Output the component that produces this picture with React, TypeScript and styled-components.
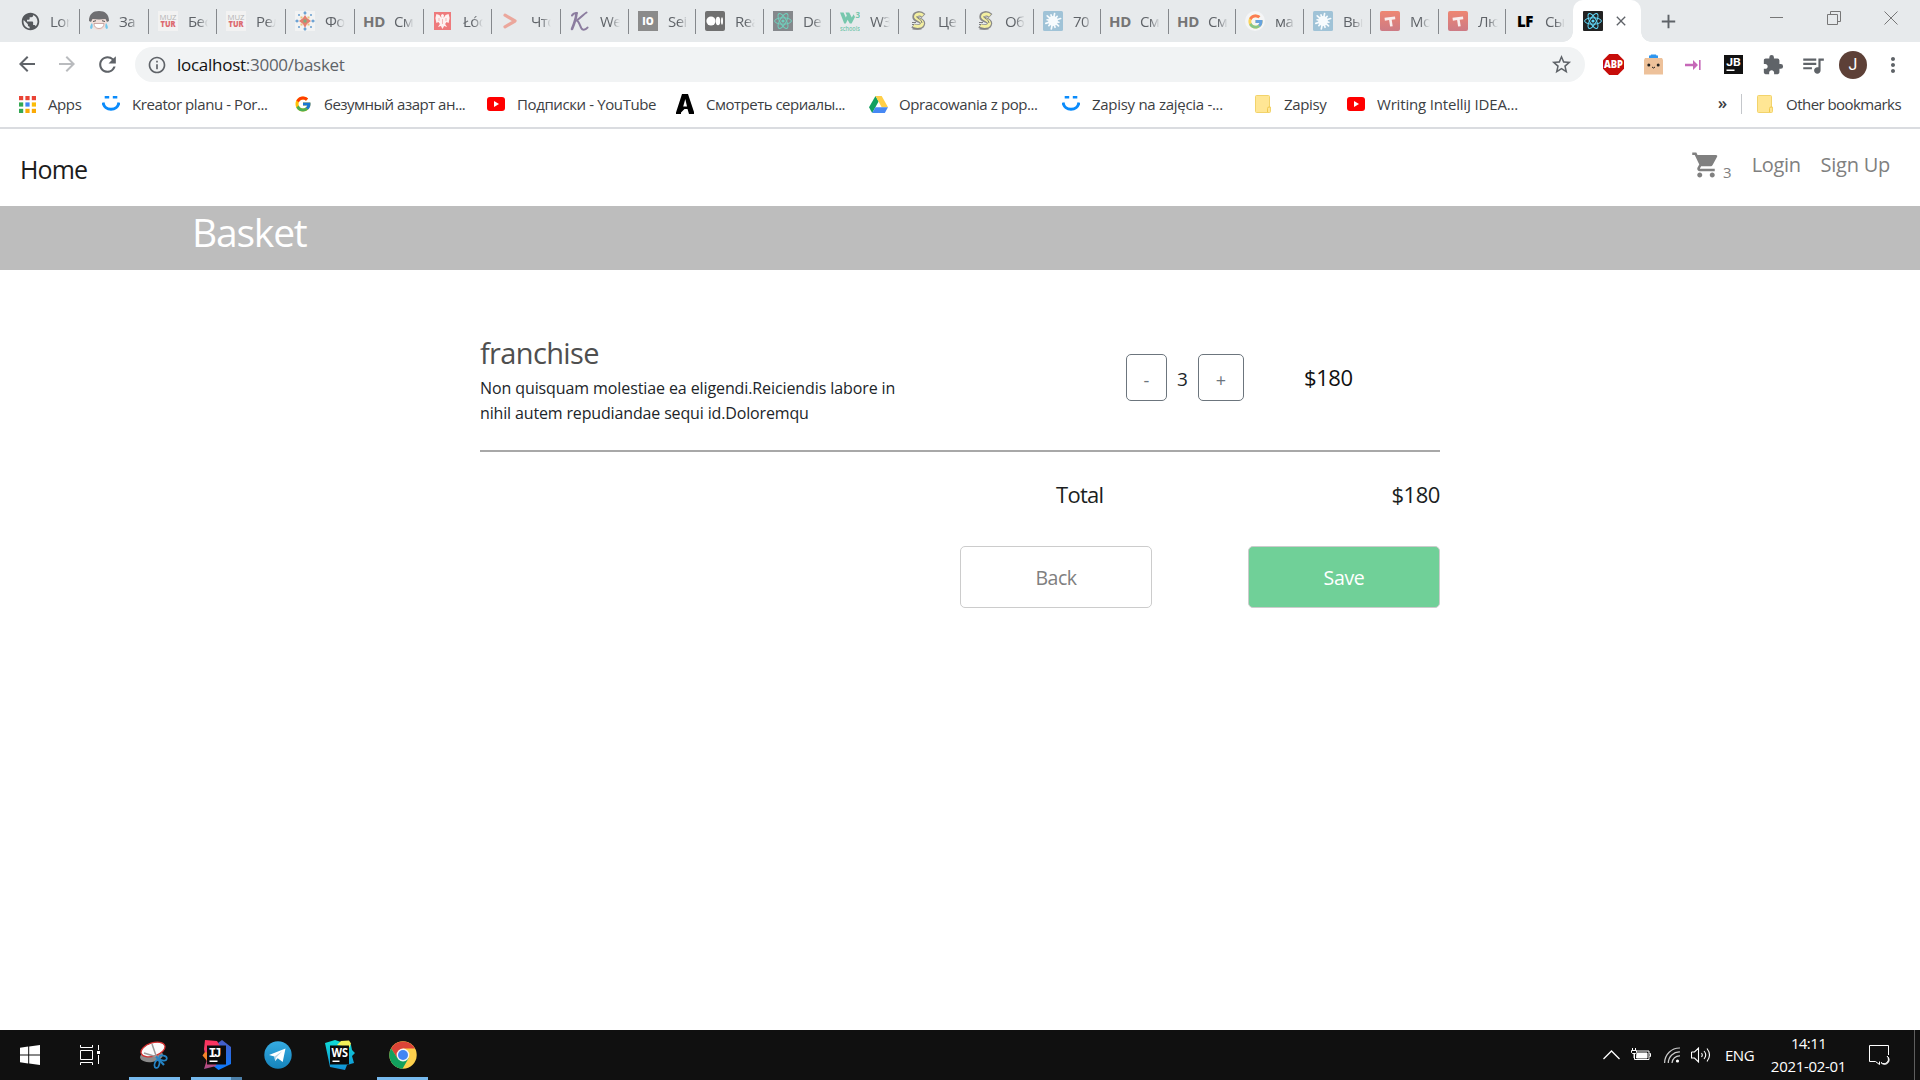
import React from "react";
import styled, { createGlobalStyle, css } from "styled-components";
import {
  MdArrowBack, MdArrowForward, MdRefresh, MdInfoOutline, MdStarOutline, MdExtension,
  MdQueueMusic, MdMoreVert, MdShoppingCart, MdClose, MdAdd, MdPublic,
} from "react-icons/md";
import { FcGoogle } from "react-icons/fc";

const GlobalStyle = createGlobalStyle`
  * { box-sizing: border-box; }
  html, body { margin: 0; padding: 0; background: #fff; }
  body { font-family: "Open Sans", "Noto Sans", sans-serif; overflow: hidden; }
  svg { display: block; flex: none; }
`;

const Screen = styled.div`
  width: 1920px;
  height: 1080px;
  display: flex;
  flex-direction: column;
  overflow: hidden;
`;

const Label = styled.span<{ $size: number; $ls?: number }>`
  font-size: ${(p) => p.$size}px;
  letter-spacing: ${(p) => p.$ls ?? 0}px;
  white-space: nowrap;
`;

/* ---------- tab strip ---------- */

const TabStrip = styled.div`
  height: 42px;
  flex: none;
  display: flex;
  background: #e7eaec;
  padding-left: 11px;
`;

const Tab = styled.div<{ $w: number }>`
  width: ${(p) => p.$w}px;
  height: 42px;
  display: flex;
  align-items: center;
  padding-left: 9px;
  background: linear-gradient(#85888c, #85888c) right 0 top 9px / 1px 25px no-repeat;
  &:last-of-type { background: none; }
`;

const TabIcon = styled.div`
  width: 20px;
  height: 20px;
  flex: none;
  display: flex;
  align-items: center;
  justify-content: center;
`;

const TabTitle = styled.div`
  width: 20px;
  margin-left: 10px;
  overflow: hidden;
  white-space: nowrap;
  font-size: 15px;
  line-height: 41px;
  letter-spacing: -0.6px;
  color: #5f6368;
  mask-image: linear-gradient(90deg, #000 50%, transparent 100%);
`;

const ActiveTab = styled.div`
  width: 68px;
  height: 42px;
  position: relative;
  background: #fff;
  border-radius: 10px 10px 0 0;
  display: flex;
  align-items: center;
  padding-left: 10px;
  gap: 10px;
  color: #5f6368;
  &::before, &::after {
    content: "";
    position: absolute;
    bottom: 0;
    width: 10px;
    height: 10px;
  }
  &::before { left: -10px; background: radial-gradient(circle at 0 0, transparent 9.5px, #fff 10px); }
  &::after { right: -10px; background: radial-gradient(circle at 100% 0, transparent 9.5px, #fff 10px); }
`;

const NewTab = styled.div`
  width: 24px;
  height: 42px;
  margin-left: 16px;
  display: flex;
  align-items: center;
  color: #5f6368;
`;

const WindowControls = styled.div`
  margin-left: auto;
  height: 36px;
  padding-right: 22px;
  display: flex;
  align-items: center;
  gap: 43px;
`;

const TextMark = styled.span<{ $color: string; $w?: number }>`
  font-weight: ${(p) => p.$w ?? 700};
  font-size: 15px;
  letter-spacing: -0.4px;
  color: ${(p) => p.$color};
`;

const ReactLogo = ({ bg, fg, r = 0 }: { bg: string; fg: string; r?: number }) => (
  <svg width="20" height="20" viewBox="0 0 20 20" fill="none" stroke={fg} strokeWidth="1">
    <rect width="20" height="20" rx={r} fill={bg} stroke="none" />
    <ellipse cx="10" cy="10" rx="8.4" ry="3.2" />
    <ellipse cx="10" cy="10" rx="8.4" ry="3.2" transform="rotate(60 10 10)" />
    <ellipse cx="10" cy="10" rx="8.4" ry="3.2" transform="rotate(120 10 10)" />
    <circle cx="10" cy="10" r="1.6" fill={fg} stroke="none" />
  </svg>
);

const Laugh = () => (
  <svg width="20" height="20" viewBox="0 0 20 20">
    <ellipse cx="10" cy="11" rx="8.2" ry="8.3" fill="#f1dfda" />
    <path d="M0 10C0 3 4 0 10 0s10 3 10 10l-2 1-1.500-3-6.500.6L3.500 8 2 11z" fill="#6f6f72" />
    <path d="M4 10.500l3-.8M16 10.500l-3-.8" stroke="#555" strokeWidth="1" />
    <path d="M5 12.500h10c0 3-2 5-5 5s-5-2-5-5z" fill="#fff" stroke="#b78d88" strokeWidth=".7" />
    <path d="M3 12c1 2 1 5-.5 6C.5 18 .8 15 3 12zM17 12c-1 2-1 5 .5 6 2 0 1.700-3-.5-6z" fill="#73c6ea" />
  </svg>
);

const MuzTur = () => (
  <svg width="20" height="20" viewBox="0 0 20 20">
    <rect width="20" height="20" fill="#f2f2f2" />
    <text x="10" y="8.600" fontSize="8" textAnchor="middle" textLength="17" lengthAdjust="spacingAndGlyphs" fill="#b5b5b5">MUZ</text>
    <text x="10" y="16.400" fontSize="8" fontWeight="800" textAnchor="middle" textLength="15" lengthAdjust="spacingAndGlyphs" fill="#dc6a70">TUR</text>
  </svg>
);

const Ornament = () => (
  <svg width="20" height="20" viewBox="0 0 20 20">
    <rect width="20" height="20" fill="#f2f3f3" />
    <path d="M10 4l2 3 4 3-4 3-2 4-2-4-4-3 4-3z" fill="#e57f70" />
    <path d="M10 0l1.800 2L10 4 8.200 2zM10 16l1.800 2L10 20l-1.800-2zM0 10l2-1.800L4 10l-2 1.800zM16 10l2-1.800L20 10l-2 1.800z" fill="#6da3d3" />
    <path d="M3 3h2v2H3zM15 3h2v2h-2zM3 15h2v2H3zM15 15h2v2h-2z" fill="#8ab3d8" />
    <path d="M5.500 5.500h2v2h-2zM12.500 5.500h2v2h-2zM5.500 12.500h2v2h-2zM12.500 12.500h2v2h-2z" fill="#ecc37a" />
    <rect x="8.500" y="8.500" width="3" height="3" fill="#7dae7e" />
  </svg>
);

const Eagle = () => (
  <svg width="20" height="20" viewBox="0 0 20 20">
    <rect x="1" y="1" width="17" height="18" fill="#ee7a7c" />
    <path d="M9.500 3l1.500 1-.4 3 2-3 3-1 1 4-1 5-2-1-1.500 2 2 3-3-1-1.600 3-1.600-3-3 1 2-3L5.400 11l-2 1-1-5 1-4 3 1 2 3L8 4z" fill="#fdf1f1" />
    <path d="M6 7v3M13 7v3M9.500 8v5" stroke="#f3a9aa" strokeWidth=".8" />
  </svg>
);

const Chevron = () => (
  <svg width="20" height="20" viewBox="0 0 20 20" fill="none" stroke="#eba79c" strokeWidth="3.200">
    <path d="M4 4.200l10 5.800L4 15.800" strokeLinejoin="round" strokeLinecap="round" />
  </svg>
);

const ScriptK = () => (
  <svg width="20" height="20" viewBox="0 0 20 20" fill="none" stroke="#8c7d9f" strokeLinecap="round">
    <path d="M6.500 2.200C6 8 4 13.500 2 18" strokeWidth="2.600" />
    <path d="M2 4.500C3 2.500 5 2 7 2M16.500 1.500C14 3 10 7.500 6.500 9.500 10 10 10 18 13 18.600c2 .3 3.500-.8 4.500-2" strokeWidth="2" />
  </svg>
);

const TenMark = () => (
  <svg width="20" height="20" viewBox="0 0 20 20">
    <rect width="20" height="20" fill="#8b8b8b" />
    <text x="10" y="13.800" fontSize="10" fontWeight="800" textAnchor="middle" fill="#fff">IO</text>
  </svg>
);

const Medium = () => (
  <svg width="20" height="20" viewBox="0 0 20 20" fill="#fff">
    <rect width="20" height="20" rx="2" fill="#707070" />
    <circle cx="6" cy="10" r="4.600" />
    <ellipse cx="13" cy="10" rx="2.200" ry="4.300" />
    <ellipse cx="17" cy="10" rx="1" ry="3.800" />
  </svg>
);

const W3 = () => (
  <svg width="20" height="21" viewBox="0 0 20 21" fill="#77c7ad">
    <path d="M0 1.500h3.600l2.200 5 1-2-1.300-3h3.700l2.600 5 1.800-3.300L15 6l-3.400 6.500H9.800L7.600 8.800 5.800 12.500H4.200z" />
    <text x="15.500" y="6.500" fontSize="8" fontWeight="700">3</text>
    <text x="0" y="19.500" fontSize="6.500" fontWeight="600" textLength="20" lengthAdjust="spacingAndGlyphs">schools</text>
  </svg>
);

const DollarS = () => (
  <svg width="20" height="20" viewBox="0 0 20 20" fill="none">
    <path d="M15.500 5C12 1.500 7 2.500 7 6c0 3.500 8 2.500 7.500 6.500C14 16.500 8 17 5 14.500" stroke="#8a8a8a" strokeWidth="5.400" />
    <path d="M15 4.500C12 2 7.500 3 7.500 6c.5 3 7 2.500 7 6.500-.5 3.500-6 3.500-9 2" stroke="#f3efa0" strokeWidth="3" />
    <path d="M8.500 5.500C9 8 14 8 14 12M4.500 18h9M4 11.500h4M4 13.500h2" stroke="#7d7d7d" strokeWidth="1" />
  </svg>
);

const spikes = [7.600, 6.200, 8, 6, 7.400, 6.600, 8, 6.200, 7.600, 6, 7.800, 6.400];
const Splash = () => (
  <svg width="20" height="20" viewBox="0 0 20 20">
    <rect width="20" height="20" rx="1.500" fill="#a0c3d7" />
    <circle cx="10" cy="10" r="4.900" fill="#f7fbfd" />
    {spikes.map((len, i) => (
      <path key={i} d={`M10 10V${10 - len}`} stroke="#f7fbfd" strokeWidth="1.700" strokeLinecap="round" transform={`rotate(${i * 30 + 12} 10 10)`} />
    ))}
  </svg>
);

const TBadge = () => (
  <svg width="20" height="20" viewBox="0 0 20 20">
    <defs>
      <linearGradient id="tb" x1="0" y1="0" x2="0" y2="1">
        <stop offset="0" stopColor="#ee8672" />
        <stop offset="1" stopColor="#cd7b85" />
      </linearGradient>
    </defs>
    <rect width="20" height="20" rx="2" fill="url(#tb)" />
    <path d="M4.500 6.800L15 5.500l.3 2.800-3.600.5 1 6.400-2.600.4-1-6.500-4.200.6z" fill="#f8eeee" />
  </svg>
);

const GCircle = styled.div`
  width: 20px;
  height: 20px;
  border-radius: 50%;
  background: #f4f5f6;
  display: flex;
  align-items: center;
  justify-content: center;
  svg { opacity: 0.65; }
`;

const Google = () => (
  <GCircle>
    <FcGoogle size={17} />
  </GCircle>
);

const HD = () => <TextMark $color="#757575">HD</TextMark>;

const tabs: { w: number; icon: React.ReactNode; title: string }[] = [
  { w: 69, icon: <MdPublic size={21} color="#55585c" />, title: "Lor" },
  { w: 69, icon: <Laugh />, title: "За" },
  { w: 68, icon: <MuzTur />, title: "Бес" },
  { w: 69, icon: <MuzTur />, title: "Рел" },
  { w: 69, icon: <Ornament />, title: "Фо" },
  { w: 69, icon: <HD />, title: "См" },
  { w: 68, icon: <Eagle />, title: "Łóс" },
  { w: 69, icon: <Chevron />, title: "Что" },
  { w: 68, icon: <ScriptK />, title: "We" },
  { w: 67, icon: <TenMark />, title: "Sei" },
  { w: 68, icon: <Medium />, title: "Rea" },
  { w: 67, icon: <ReactLogo bg="#85888c" fg="#6fd0bd" />, title: "De" },
  { w: 68, icon: <W3 />, title: "W3" },
  { w: 67, icon: <DollarS />, title: "Це" },
  { w: 68, icon: <DollarS />, title: "Об" },
  { w: 67, icon: <Splash />, title: "70" },
  { w: 68, icon: <HD />, title: "См" },
  { w: 67, icon: <HD />, title: "См" },
  { w: 68, icon: <Google />, title: "ма" },
  { w: 67, icon: <Splash />, title: "Вы" },
  { w: 68, icon: <TBadge />, title: "Мо" },
  { w: 67, icon: <TBadge />, title: "Лю" },
  { w: 67, icon: <TextMark $color="#000" $w={800}>LF</TextMark>, title: "Сы" },
];

const Tabs = styled.div`
  display: flex;
`;

/* ---------- toolbar ---------- */

const Toolbar = styled.div`
  height: 45px;
  flex: none;
  display: flex;
  align-items: center;
  padding: 0 0 0 15px;
  color: #5f6368;
`;

const NavButtons = styled.div`
  width: 120px;
  flex: none;
  display: flex;
  gap: 16px;
`;

const Omnibox = styled.div`
  width: 1450px;
  height: 35px;
  flex: none;
  border-radius: 18px;
  background: #f1f3f4;
  display: flex;
  align-items: center;
  padding: 0 12px 0 12px;
`;

const Url = styled.div`
  margin-left: 10px;
  flex: 1;
  color: #5f6368;
  line-height: 35px;
  b { font-weight: 400; color: #111; }
`;

const Extensions = styled.div`
  display: grid;
  grid-template-columns: repeat(8, 40px);
  margin-left: 8px;
  height: 35px;
  justify-items: center;
  align-items: center;
`;

const Avatar = styled.div`
  width: 28px;
  height: 28px;
  border-radius: 50%;
  background: #5d4037;
  color: #fff;
  font: 16px Roboto, sans-serif;
  display: flex;
  align-items: center;
  justify-content: center;
`;

const Abp = () => (
  <svg width="21" height="21" viewBox="0 0 21 21">
    <path d="M6.200 0h8.600L21 6.200v8.600L14.800 21H6.200L0 14.800V6.200z" fill="#c70d0a" />
    <text x="10.500" y="14.200" fontSize="10.500" fontWeight="800" textAnchor="middle" textLength="19" lengthAdjust="spacingAndGlyphs" fill="#fff">ABP</text>
  </svg>
);

const BoxFace = () => (
  <svg width="19" height="21" viewBox="0 0 19 21">
    <path d="M5 1.500h1.500L7 .5h5l.5 1H14V5H5z" fill="#2f96ef" />
    <path d="M1 4h17l1 2v14.500H0V6z" fill="#edc19a" />
    <circle cx="4.800" cy="11" r="1.500" fill="#222" />
    <circle cx="14.200" cy="11" r="1.500" fill="#222" />
    <path d="M8 13l1.500 1 1.500-1" stroke="#222" fill="none" />
  </svg>
);

const ArrowBar = () => (
  <svg width="16" height="12" viewBox="0 0 16 12">
    <path d="M0 4.700h8V1l5 5-5 5V7.300H0z" fill="#c668b8" />
    <rect x="14" y="1" width="1.600" height="10" fill="#c668b8" />
  </svg>
);

const Jb = () => (
  <svg width="19" height="19" viewBox="0 0 19 19">
    <rect width="19" height="19" fill="#111" />
    <text x="9.500" y="11" fontSize="11.500" fontWeight="700" fontFamily="Roboto" textAnchor="middle" textLength="14.500" lengthAdjust="spacingAndGlyphs" fill="#fff">JB</text>
    <rect x="2.500" y="14.500" width="8" height="1.500" fill="#fff" />
  </svg>
);

/* ---------- bookmarks ---------- */

const BookmarkBar = styled.div`
  height: 42px;
  flex: none;
  display: flex;
  align-items: center;
  padding: 0 19px 6px 17px;
  border-bottom: 2px solid #dadce0;
  color: #3c4043;
`;

const Bookmark = styled.div<{ $w?: number }>`
  width: ${(p) => (p.$w ? `${p.$w}px` : "auto")};
  display: flex;
  align-items: center;
`;

const BookmarkIcon = styled.div`
  width: 20px;
  height: 20px;
  margin-right: 11px;
  display: flex;
  align-items: center;
  justify-content: center;
  flex: none;
`;

const Overflow = styled.div`
  margin-left: auto;
  height: 20px;
  display: flex;
  align-items: center;
`;

const More = styled.span`
  font-size: 17px;
  font-weight: 600;
  line-height: 18px;
  padding-bottom: 3px;
`;

const Divider = styled.div`
  width: 1px;
  height: 20px;
  margin: 0 13px 0 14px;
  background: #c4c7cb;
`;

const appColors = ["#ea4335", "#ea4335", "#ea4335", "#34a853", "#4285f4", "#fbbc05", "#34a853", "#fbaa05", "#fbaa05"];
const AppsGrid = () => (
  <svg width="17" height="17" viewBox="0 0 17 17">
    {appColors.map((c, i) => (
      <rect key={i} x={(i % 3) * 6.400} y={Math.floor(i / 3) * 6.400} width="4.200" height="4.200" fill={c} />
    ))}
  </svg>
);
const Smile = () => (
  <svg width="18" height="16" viewBox="0 0 18 16" fill="none" stroke="#0a8bfb">
    <path d="M2.700 1.200h4.500M10.800 1.200h4.500" strokeWidth="2.400" />
    <path d="M1 6.500c1.500 9 14.500 9 16 0" strokeWidth="3" />
  </svg>
);
const YouTube = () => (
  <svg width="18" height="14" viewBox="0 0 18 14">
    <rect width="18" height="14" rx="3" fill="#f00" />
    <path d="M7 4l5 3-5 3z" fill="#fff" />
  </svg>
);
const LetterA = () => (
  <svg width="20" height="20" viewBox="0 0 20 20">
    <path d="M7 0h6l6 18v2h-5l-1.500-5h-3L6 18.500V20H1v-1.500z" fill="#000" />
    <path d="M8.200 12.500h3.800L10.300 5z" fill="#fff" />
  </svg>
);
const Drive = () => (
  <svg width="19" height="17" viewBox="0 0 19 17">
    <path d="M6.500 0L0 11.300 3.200 17 9.600 5.600z" fill="#11a05f" />
    <path d="M6.500 0h6.200L19 11.300h-6.300z" fill="#ffcf48" />
    <path d="M6.400 11.300H19L15.800 17H3.200z" fill="#4688f4" />
  </svg>
);
const Folder = () => (
  <svg width="16" height="18" viewBox="0 0 16 18">
    <path d="M.5 1.500q0-1 1-1h12q1 0 1 1v10.500h1v4.500q0 1-1 1h-13q-1 0-1-1z" fill="#ffe694" stroke="#f2d36b" />
    <path d="M12.500 17v-3.500q0-1.500 1.500-1.500h1" fill="none" stroke="#f0c94e" />
  </svg>
);

const bookmarks: { w: number; icon: React.ReactNode; text: string; ls: number }[] = [
  { w: 84, icon: <AppsGrid />, text: "Apps", ls: -0.4 },
  { w: 192, icon: <Smile />, text: "Kreator planu - Por...", ls: -0.42 },
  { w: 193, icon: <FcGoogle size={18} />, text: "безумный азарт ан...", ls: -0.5 },
  { w: 189, icon: <YouTube />, text: "Подписки - YouTube", ls: -0.39 },
  { w: 193, icon: <LetterA />, text: "Смотреть сериалы...", ls: -0.5 },
  { w: 193, icon: <Drive />, text: "Opracowania z pop...", ls: -0.41 },
  { w: 192, icon: <Smile />, text: "Zapisy na zajęcia -...", ls: -0.29 },
  { w: 93, icon: <Folder />, text: "Zapisy", ls: -0.35 },
  { w: 180, icon: <YouTube />, text: "Writing IntelliJ IDEA...", ls: -0.18 },
];

/* ---------- page ---------- */

const Page = styled.main`
  flex: 1;
  display: flex;
  flex-direction: column;
  background: #fff;
`;

const Nav = styled.nav`
  height: 77px;
  display: flex;
  align-items: center;
  justify-content: space-between;
  padding: 2px 30px 0 20px;
  color: #1c1c1c;
`;

const NavLinks = styled.div`
  display: flex;
  align-items: center;
  gap: 20px;
  margin-bottom: 8px;
  color: #808080;
`;

const CartCount = styled.div`
  display: flex;
  align-items: center;
  sub { font-size: 15px; line-height: 15px; margin: 15px 0 0 2px; }
`;

const Banner = styled.header`
  height: 64px;
  background: #bdbdbd;
  padding-left: 10%;
  color: #fff;
  line-height: 52px;
`;

const Content = styled.section`
  width: 960px;
  margin: 65px auto 0;
`;

const Item = styled.div`
  height: 117px;
  display: grid;
  grid-template-columns: 646px 178px 136px;
  border-bottom: 2px solid #a8a8a8;
`;

const ItemName = styled.div`
  height: 41px;
  line-height: 36px;
  color: #4f4f4f;
`;

const ItemText = styled.div`
  color: #212529;
  line-height: 25px;
`;

const Quantity = styled.div`
  height: 47px;
  margin-top: 19px;
  display: flex;
  align-items: center;
  color: #212529;
`;

const StepButton = styled.button<{ $w: number }>`
  width: ${(p) => p.$w}px;
  height: 47px;
  padding: 4px 0 0;
  border: 1px solid #6c757d;
  border-radius: 5px;
  background: #fff;
  color: #6c757d;
  font: 18px "Open Sans", sans-serif;
`;

const Count = styled.div`
  width: 31px;
  padding-top: 2px;
  text-align: center;
`;

const Price = styled.div`
  height: 47px;
  margin-top: 19px;
  line-height: 47px;
  color: #111;
`;

const TotalRow = styled.div`
  height: 94px;
  padding-left: 576px;
  display: flex;
  justify-content: space-between;
  line-height: 84px;
  color: #1b1e21;
`;

const Actions = styled.div`
  display: flex;
  justify-content: flex-end;
  gap: 96px;
`;

const ActionButton = styled.button<{ $primary?: boolean }>`
  width: 192px;
  height: 62px;
  border: 1px solid #ccc;
  border-radius: 5px;
  background: #fff;
  color: #808080;
  font-family: inherit;
  padding: 1px 0 0;
  ${(p) => p.$primary && css`
    background: #70d098;
    color: #fff;
  `}
`;

/* ---------- taskbar ---------- */

const Taskbar = styled.footer`
  height: 50px;
  flex: none;
  background: #101010;
  color: #fff;
  display: flex;
`;

const TaskItem = styled.div<{ $w: number; $open?: boolean; $multi?: boolean }>`
  width: ${(p) => p.$w}px;
  height: 50px;
  display: flex;
  align-items: center;
  justify-content: center;
  background: ${(p) =>
    p.$multi
      ? "linear-gradient(90deg, #76b9ed 40px, #4c7fa8 40px) center bottom / 51px 3px no-repeat"
      : p.$open
        ? "linear-gradient(#76b9ed, #76b9ed) center bottom / 51px 3px no-repeat"
        : "none"};
`;

const Tray = styled.div`
  margin-left: auto;
  display: flex;
  align-items: center;
`;

const TraySlot = styled.div<{ $w: number; $indent?: number }>`
  width: ${(p) => p.$w}px;
  padding-left: ${(p) => p.$indent ?? 0}px;
`;

const Clock = styled.div`
  width: 97px;
  display: flex;
  flex-direction: column;
  align-items: center;
  line-height: 23px;
`;

const ShowDesktop = styled.div`
  width: 6px;
  height: 50px;
  border-left: 1px solid #5e5e5e;
`;

const Windows = () => (
  <svg width="20" height="20" viewBox="0 0 20 20" fill="#fff">
    <path d="M0 2.800l8.200-1.200v8H0zM9.200 1.400L20 0v9.500H9.200zM0 10.500h8.200v8L0 17.300zM9.200 10.500H20V20L9.200 18.600z" />
  </svg>
);
const TaskView = () => (
  <svg width="20" height="20" viewBox="0 0 20 20" fill="none" stroke="#fff">
    <path d="M.5 0v2.500h12V0M.5 20v-2.500h12V20M.5 5.500h12v9H.5zM18.500 0v5M18.500 10v9" />
    <path d="M17 6h3v3h-3z" fill="#fff" stroke="none" />
  </svg>
);
const Snip = () => (
  <svg width="28" height="28" viewBox="0 0 28 28" fill="none">
    <ellipse cx="11.500" cy="15" rx="11.500" ry="6" fill="#8b8b8b" transform="rotate(-8 11.500 15)" />
    <ellipse cx="13" cy="8.500" rx="12.400" ry="6.600" fill="#fafafa" stroke="#d22f2f" strokeWidth="1.300" transform="rotate(-18 13 8.500)" />
    <path d="M12 3l4.500 13M4 12l13 4" stroke="#999" strokeWidth="1.500" />
    <ellipse cx="23" cy="17" rx="3.800" ry="2.500" stroke="#2484c6" strokeWidth="1.700" transform="rotate(15 23 17)" />
    <ellipse cx="17" cy="23" rx="2.300" ry="4" stroke="#2484c6" strokeWidth="1.700" transform="rotate(15 17 23)" />
    <path d="M16 15.500l8 8.500" stroke="#2484c6" strokeWidth="2.200" />
  </svg>
);
const IntelliJ = () => (
  <svg width="30" height="30" viewBox="0 0 30 30">
    <defs>
      <linearGradient id="ijBlue" x1="0" y1="0" x2="0" y2="1">
        <stop offset="0" stopColor="#4a5bc4" />
        <stop offset="1" stopColor="#0a7cff" />
      </linearGradient>
      <linearGradient id="ijRed" x1="0" y1="0" x2="0" y2="1">
        <stop offset="0" stopColor="#fe315d" />
        <stop offset=".6" stopColor="#e8466a" />
        <stop offset="1" stopColor="#a0508c" />
      </linearGradient>
    </defs>
    <path d="M16 3l4-3 9 7v17l-12.500 6-7-5.500z" fill="url(#ijBlue)" />
    <path d="M3 0l12 1 3 5-4 20-12 3 2.500-8L2 9z" fill="url(#ijRed)" />
    <path d="M.5 15.500L3 12l3 1v9z" fill="#f58529" />
    <rect x="5" y="5.500" width="19" height="19" fill="#0a0a0a" />
    <text x="6.500" y="16.500" fontSize="13" fontWeight="700" fontFamily="Liberation Mono" fill="#fff" textLength="13">IJ</text>
    <rect x="7.500" y="20.500" width="8" height="1.500" fill="#fff" />
  </svg>
);
const Telegram = () => (
  <svg width="28" height="28" viewBox="0 0 28 28">
    <defs>
      <linearGradient id="tg" x1="0" y1="0" x2="0" y2="1">
        <stop offset="0" stopColor="#35abe2" />
        <stop offset="1" stopColor="#1583bb" />
      </linearGradient>
    </defs>
    <circle cx="14" cy="14" r="13.700" fill="url(#tg)" />
    <path d="M5 14l16.500-6.500-2.800 13.500-5-3.700-2.600 2.700-.7-4.600z" fill="#fff" />
    <path d="M10.500 15.400l8-5.400-6.300 6.500-1 3.500z" fill="#b8d6e8" />
  </svg>
);
const WebStorm = () => (
  <svg width="30" height="30" viewBox="0 0 30 30">
    <defs>
      <linearGradient id="ws" x1="0" y1="0" x2="0" y2="1">
        <stop offset="0" stopColor="#0fdcd6" />
        <stop offset="1" stopColor="#118fd6" />
      </linearGradient>
    </defs>
    <path d="M0 3L10 0l6 2 6-1 4 4 1 5 3 3-3 3 2 7-7 2-2 5L5 27z" fill="url(#ws)" />
    <path d="M12 5l4-4 8-.5 2 3-1.500 4z" fill="#f3f058" />
    <rect x="5" y="5.500" width="19" height="19" fill="#0a0a0a" />
    <text x="6.500" y="16.500" fontSize="12" fontWeight="700" fill="#fff" textLength="16.500" lengthAdjust="spacingAndGlyphs">WS</text>
    <rect x="7.500" y="20.500" width="7" height="1.500" fill="#fff" />
  </svg>
);
const Chrome = () => (
  <svg width="28" height="28" viewBox="0 0 28 28">
    <circle cx="14" cy="14" r="13.700" fill="#fdd04c" />
    <path d="M2.100 7.200A13.700 13.700 0 0 1 25.900 7.500L14 7.500 8.500 17.500z" fill="#db4437" />
    <path d="M2.100 7.200A13.700 13.700 0 0 0 13.500 27.700L19.600 17.300 8.400 17.300z" fill="#12a05d" />
    <circle cx="14" cy="14" r="6.400" fill="#f4f4f4" />
    <circle cx="14" cy="14" r="5" fill="#4285f4" />
  </svg>
);

export default function App() {
  return (
    <Screen>
      <GlobalStyle />
      <TabStrip>
        <Tabs>
          {tabs.map((t, i) => (
            <Tab key={i} $w={t.w}>
              <TabIcon>{t.icon}</TabIcon>
              <TabTitle>{t.title}</TabTitle>
            </Tab>
          ))}
        </Tabs>
        <ActiveTab>
          <ReactLogo bg="#222" fg="#61dafb" r={1} />
          <MdClose size={16} />
        </ActiveTab>
        <NewTab><MdAdd size={23} /></NewTab>
        <WindowControls>
          <svg width="14" height="14" stroke="#777" fill="none"><path d="M0 6.500h13" /></svg>
          <svg width="14" height="14" stroke="#777" fill="none"><path d="M.5 3.500h10v10H.5zM3.500 3.500v-3h10v10h-3" /></svg>
          <svg width="14" height="14" stroke="#777" fill="none"><path d="M.5.5l13 13M13.500.5l-13 13" /></svg>
        </WindowControls>
      </TabStrip>

      <Toolbar>
        <NavButtons>
          <MdArrowBack size={24} />
          <MdArrowForward size={24} color="#b9bbbe" />
          <MdRefresh size={25} />
        </NavButtons>
        <Omnibox>
          <MdInfoOutline size={20} />
          <Url><Label $size={17} $ls={-0.27}><b>localhost</b>:3000/basket</Label></Url>
          <MdStarOutline size={23} />
        </Omnibox>
        <Extensions>
          <Abp />
          <BoxFace />
          <ArrowBar />
          <Jb />
          <MdExtension size={22} />
          <MdQueueMusic size={26} />
          <Avatar>J</Avatar>
          <MdMoreVert size={24} />
        </Extensions>
      </Toolbar>

      <BookmarkBar>
        {bookmarks.map((b) => (
          <Bookmark key={b.text} $w={b.w}>
            <BookmarkIcon>{b.icon}</BookmarkIcon>
            <Label $size={15} $ls={b.ls}>{b.text}</Label>
          </Bookmark>
        ))}
        <Overflow>
          <More>»</More>
          <Divider />
          <Bookmark>
            <BookmarkIcon><Folder /></BookmarkIcon>
            <Label $size={15} $ls={-0.55}>Other bookmarks</Label>
          </Bookmark>
        </Overflow>
      </BookmarkBar>

      <Page>
        <Nav>
          <Label $size={25} $ls={-0.9}>Home</Label>
          <NavLinks>
            <CartCount>
              <MdShoppingCart size={30} />
              <sub>3</sub>
            </CartCount>
            <Label $size={20} $ls={-0.35}>Login</Label>
            <Label $size={20} $ls={-0.25}>Sign Up</Label>
          </NavLinks>
        </Nav>
        <Banner><Label $size={39} $ls={-1.2}>Basket</Label></Banner>
        <Content>
          <Item>
            <div>
              <ItemName><Label $size={29} $ls={-0.65}>franchise</Label></ItemName>
              <ItemText>
                <Label $size={16} $ls={-0.1}>Non quisquam molestiae ea eligendi.Reiciendis labore in</Label>
                <br />
                <Label $size={16} $ls={-0.15}>nihil autem repudiandae sequi id.Doloremqu</Label>
              </ItemText>
            </div>
            <Quantity>
              <StepButton $w={41}>-</StepButton>
              <Count><Label $size={19}>3</Label></Count>
              <StepButton $w={46}>+</StepButton>
            </Quantity>
            <Price><Label $size={22} $ls={-0.45}>$180</Label></Price>
          </Item>
          <TotalRow>
            <Label $size={22} $ls={-0.7}>Total</Label>
            <Label $size={22} $ls={-0.45}>$180</Label>
          </TotalRow>
          <Actions>
            <ActionButton><Label $size={19.5} $ls={-0.5}>Back</Label></ActionButton>
            <ActionButton $primary><Label $size={19.5} $ls={-0.3}>Save</Label></ActionButton>
          </Actions>
        </Content>
      </Page>

      <Taskbar>
        <TaskItem $w={60}><Windows /></TaskItem>
        <TaskItem $w={60}><TaskView /></TaskItem>
        <TaskItem $w={68} $open><Snip /></TaskItem>
        <TaskItem $w={57} $multi><IntelliJ /></TaskItem>
        <TaskItem $w={65}><Telegram /></TaskItem>
        <TaskItem $w={60}><WebStorm /></TaskItem>
        <TaskItem $w={65} $open><Chrome /></TaskItem>
        <Tray>
          <TraySlot $w={28}>
            <svg width="17" height="10" fill="none" stroke="#fff" strokeWidth="1.300"><path d="M.5 9l8-8 8 8" /></svg>
          </TraySlot>
          <TraySlot $w={33}>
            <svg width="20" height="14" viewBox="0 0 20 14" fill="none" stroke="#fff">
              <path d="M3.500 5v6.500h14.500V3H6" /><path d="M6 5h10v5H5.500z" fill="#fff" /><path d="M18.500 5.500h1v3h-1" />
              <path d="M1.500 0v2M4.500 0v2M.5 2.500h5v2l-1 1h-3l-1-1zM3 6v4" />
            </svg>
          </TraySlot>
          <TraySlot $w={27}>
            <svg width="16" height="16" viewBox="0 0 16 16" fill="none" stroke="#ccc" strokeWidth="1.200">
              <path d="M.6 16A15 15 0 0 1 16 1M4.300 16A11 11 0 0 1 16 5M8 16A7.500 7.500 0 0 1 16 8.800" />
              <circle cx="13.500" cy="14" r="1.600" fill="#fff" stroke="none" />
            </svg>
          </TraySlot>
          <TraySlot $w={34}>
            <svg width="21" height="18" viewBox="0 0 21 18" fill="none" stroke="#fff" strokeWidth="1.100">
              <path d="M.5 6h3l4-4v14l-4-4h-3v-6M10.500 7q1.500 2 0 4M13 5q3.500 4 0 8M16 2.500q5 6.500 0 13" />
            </svg>
          </TraySlot>
          <TraySlot $w={35}><Label $size={15} $ls={-0.5}>ENG</Label></TraySlot>
          <Clock>
            <Label $size={15} $ls={-0.6}>14:11</Label>
            <Label $size={15} $ls={-0.3}>2021-02-01</Label>
          </Clock>
          <TraySlot $w={57} $indent={12}>
            <svg width="22" height="20" viewBox="0 0 22 20" fill="none" stroke="#fff">
              <path d="M19.500 10V.5H.5v16h6l4 3v-3" /><path d="M18 11a4 4 0 0 1-6 6.500A4.500 4.500 0 1 0 18 11z" fill="#ddd" />
            </svg>
          </TraySlot>
          <ShowDesktop />
        </Tray>
      </Taskbar>
    </Screen>
  );
}
